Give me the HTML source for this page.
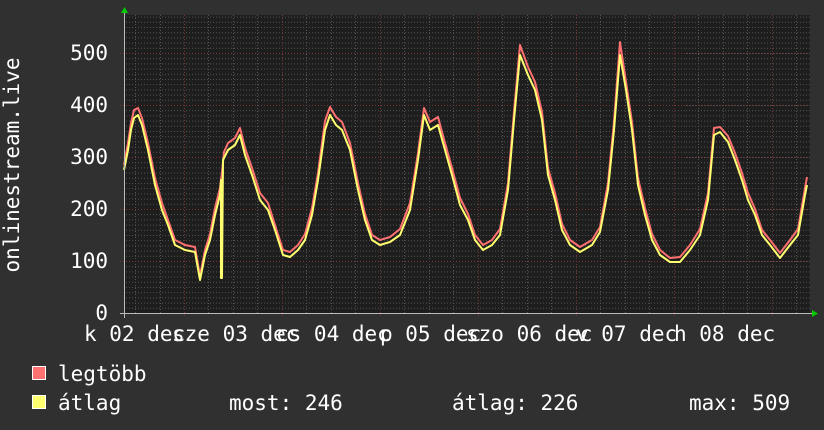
<!DOCTYPE html>
<html><head><meta charset="utf-8"><style>
html,body{margin:0;padding:0;background:#303030;}
svg{display:block}
text{font-family:"DejaVu Sans Mono","Liberation Mono",monospace;fill:#fff;font-size:21px}
</style></head><body>
<svg width="824" height="430" xmlns="http://www.w3.org/2000/svg">
<defs>
<pattern id="hmin" x="0" y="313" width="686" height="5.2" patternUnits="userSpaceOnUse">
<line x1="0" y1="0.5" x2="686" y2="0.5" stroke="#555" stroke-width="1" stroke-dasharray="1,2"/>
</pattern>
</defs>
<rect x="0" y="0" width="824" height="430" fill="#303030"/>
<rect x="124" y="15" width="686" height="299" fill="#1e1e1e"/>
<rect x="124" y="15" width="686" height="299" fill="url(#hmin)"/>
<g stroke="#555" stroke-width="1" stroke-dasharray="1,2">
<line x1="135.5" y1="15" x2="135.5" y2="314"/><line x1="160.5" y1="15" x2="160.5" y2="314"/>
<line x1="208.5" y1="15" x2="208.5" y2="314"/><line x1="233.5" y1="15" x2="233.5" y2="314"/><line x1="257.5" y1="15" x2="257.5" y2="314"/>
<line x1="306.5" y1="15" x2="306.5" y2="314"/><line x1="331.5" y1="15" x2="331.5" y2="314"/><line x1="355.5" y1="15" x2="355.5" y2="314"/>
<line x1="404.5" y1="15" x2="404.5" y2="314"/><line x1="429.5" y1="15" x2="429.5" y2="314"/><line x1="453.5" y1="15" x2="453.5" y2="314"/>
<line x1="502.5" y1="15" x2="502.5" y2="314"/><line x1="527.5" y1="15" x2="527.5" y2="314"/><line x1="551.5" y1="15" x2="551.5" y2="314"/>
<line x1="600.5" y1="15" x2="600.5" y2="314"/><line x1="625.5" y1="15" x2="625.5" y2="314"/><line x1="649.5" y1="15" x2="649.5" y2="314"/>
<line x1="698.5" y1="15" x2="698.5" y2="314"/><line x1="723.5" y1="15" x2="723.5" y2="314"/><line x1="747.5" y1="15" x2="747.5" y2="314"/>
<line x1="796.5" y1="15" x2="796.5" y2="314"/>
</g>
<g stroke="#7a3434" stroke-width="1" stroke-dasharray="1,2">
<line x1="184.5" y1="15" x2="184.5" y2="318"/><line x1="282.5" y1="15" x2="282.5" y2="318"/><line x1="380.5" y1="15" x2="380.5" y2="318"/>
<line x1="478.5" y1="15" x2="478.5" y2="318"/><line x1="576.5" y1="15" x2="576.5" y2="318"/><line x1="674.5" y1="15" x2="674.5" y2="318"/><line x1="772.5" y1="15" x2="772.5" y2="318"/>
<line x1="120" y1="53.5" x2="810" y2="53.5"/><line x1="120" y1="105.5" x2="810" y2="105.5"/><line x1="120" y1="157.5" x2="810" y2="157.5"/>
<line x1="120" y1="209.5" x2="810" y2="209.5"/><line x1="120" y1="261.5" x2="810" y2="261.5"/>
</g>
<g fill="none" stroke-width="2" stroke-linejoin="round">
<polyline stroke="#ff7070" points="124,165 128,143 131,123 134,110 138,108 142,118 148,143 155,178 162,203 168,220 175,240 185,245 195,247 200,276 205,250 210,234 215,208 220,188 222,172 224,152 228,143 235,138 240,128 245,148 252,168 260,193 268,203 275,225 283,250 290,252 298,245 305,234 312,208 318,173 325,121 330,107 336,117 342,122 350,143 358,183 365,214 372,235 380,240 390,237 400,229 410,203 418,153 424,108 430,122 438,117 445,143 452,168 460,198 468,214 475,235 483,245 492,240 500,229 508,183 514,112 520,45 528,67 535,82 542,112 548,168 555,193 562,224 570,240 580,247 592,240 600,227 608,183 614,122 620,42 626,82 632,122 638,178 645,208 652,234 660,250 670,258 680,257 690,245 700,229 708,193 714,128 720,127 728,136 735,153 742,173 748,193 755,209 762,230 770,240 780,253 790,240 798,229 805,188 807,177"/>
<polyline stroke="#ffff70" points="124,170 128,150 131,130 134,118 138,115 142,125 148,150 155,185 162,210 168,225 175,245 185,250 195,252 200,280 205,255 210,240 215,215 220,195 221,180 221,278 222,278 223,160 228,150 235,145 240,135 245,155 252,175 260,200 268,210 275,230 283,255 290,257 298,250 305,240 312,215 318,180 325,130 330,115 336,125 342,130 350,150 358,190 365,220 372,240 380,245 390,242 400,235 410,210 418,160 424,115 430,130 438,125 445,150 452,175 460,205 468,220 475,240 483,250 492,245 500,235 508,190 514,120 520,55 528,75 535,90 542,120 548,175 555,200 562,230 570,245 580,252 592,245 600,232 608,190 614,130 620,55 626,90 632,130 638,185 645,215 652,240 660,255 670,262 680,262 690,250 700,235 708,200 714,135 720,132 728,142 735,160 742,180 748,200 755,215 762,235 770,245 780,258 790,245 798,235 805,195 807,185"/>
</g>
<line x1="120" y1="313.5" x2="814" y2="313.5" stroke="#bbb"/>
<line x1="124.5" y1="12" x2="124.5" y2="318" stroke="#bbb"/>
<polygon points="121,13 128,13 124.5,7" fill="#00cc00"/>
<polygon points="812,310 812,317 818,313.5" fill="#00cc00"/>
<g text-anchor="end">
<text x="108" y="60">500</text><text x="108" y="112">400</text><text x="108" y="164">300</text>
<text x="108" y="216">200</text><text x="108" y="268">100</text><text x="108" y="320">0</text>
</g>
<text transform="translate(19,165) rotate(-90)" text-anchor="middle">onlinestream.live</text>
<text x="84" y="341">k 02 dec</text>
<text x="172" y="341">sze 03 dec</text>
<text x="276" y="341">cs 04 dec</text>
<text x="380" y="341">p 05 dec</text>
<text x="466" y="341">szo 06 dec</text>
<text x="576" y="341">v 07 dec</text>
<text x="674" y="341">h 08 dec</text>
<rect x="32.5" y="366.5" width="13" height="13" fill="#ff7070" stroke="#fff"/>
<rect x="32.5" y="395.5" width="13" height="13" fill="#ffff70" stroke="#fff"/>
<text x="58" y="381">legtöbb</text>
<text x="58" y="410">átlag</text>
<text x="229" y="410">most: 246</text>
<text x="452" y="410">átlag: 226</text>
<text x="689" y="410">max: 509</text>
</svg>
</body></html>
